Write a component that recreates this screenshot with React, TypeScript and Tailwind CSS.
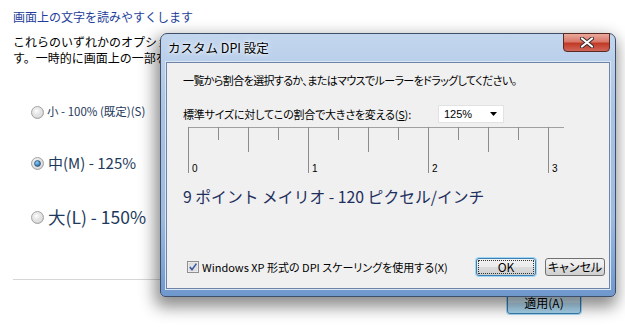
const jp = "font-['Noto_Sans_CJK_JP','Noto_Sans',sans-serif]";
const ui = "[font-feature-settings:'palt']";

function Radio({ checked }: { checked?: boolean }) {
  return (
    <svg width="13" height="13" viewBox="0 0 13 13" className="shrink-0">
      <defs>
        <radialGradient id="rg" cx="40%" cy="35%" r="70%">
          <stop offset="0%" stopColor="#ffffff" />
          <stop offset="100%" stopColor="#c9c9c9" />
        </radialGradient>
        <radialGradient id="dot" cx="40%" cy="35%" r="70%">
          <stop offset="0%" stopColor="#8fd0f5" />
          <stop offset="100%" stopColor="#1b5f9c" />
        </radialGradient>
      </defs>
      <circle cx="6.5" cy="6.5" r="6" fill="url(#rg)" stroke="#a4a4a4" strokeWidth="1" />
      <circle cx="6.5" cy="6.5" r="4" fill="none" stroke="#e8e8e8" strokeWidth="1" />
      {checked && <circle cx="6.5" cy="6.5" r="3" fill="url(#dot)" stroke="#1f3f66" strokeWidth="0.6" />}
    </svg>
  );
}

function Ruler() {
  const ticks = Array.from({ length: 13 }, (_, i) => i);
  return (
    <svg width="376" height="46" className="block">
      <line x1="0" y1="0.5" x2="376" y2="0.5" stroke="#a0a0a0" />
      {ticks.map((i) => {
        const x = i * 30 + 0.5;
        const h = i % 4 === 0 ? 46 : i % 2 === 0 ? 25 : 13;
        return <line key={i} x1={x} y1="0" x2={x} y2={h} stroke="#8c8c8c" />;
      })}
      {[0, 1, 2, 3].map((n) => (
        <text key={n} x={n * 120 + 4} y="45" fontSize="10" fill="#000" fontFamily="'Liberation Sans', sans-serif">
          {n}
        </text>
      ))}
    </svg>
  );
}

function WinButton({ children, focused }: { children: React.ReactNode; focused?: boolean }) {
  return (
    <div
      className={`h-[18px] w-[60px] rounded-[3px] border ${
        focused ? 'border-[#3c7fb1] shadow-[0_0_0_1px_#9fd5f5]' : 'border-[#707070]'
      } bg-[linear-gradient(#f2f2f2_0%,#ebebeb_50%,#dddddd_51%,#cfcfcf_100%)] p-[1px]`}
    >
      <div
        className={`flex h-full items-center justify-center text-[12px] leading-none text-black ${
          focused ? 'outline outline-1 outline-dotted outline-[#333] -outline-offset-1' : ''
        }`}
      >
        {children}
      </div>
    </div>
  );
}

export default function App() {
  return (
    <div className={`relative h-[327px] w-[625px] overflow-hidden bg-white ${jp}`}>
      {/* control panel page */}
      <div className="flex flex-col pl-[13px] pt-[8px]">
        <p className="h-[17px] whitespace-nowrap text-[12px] leading-[17px] text-[#1e3e9a]">画面上の文字を読みやすくします</p>
        <div className="mt-[9px] w-[147px] overflow-hidden whitespace-nowrap text-[12px] leading-[16px] text-black">
          <p>これらのいずれかのオプションを選択して、画面上のテキストやその他の項目のサイズを変更できま</p>
          <p>す。一時的に画面上の一部を拡大するには、拡大鏡 ツールを使用します。</p>
        </div>
        <div className="ml-[18px] mt-[38px] flex h-[16px] items-center gap-[3px] text-[11.5px] text-[#1e395b]">
          <Radio />
          <span>小 - 100% (既定)(S)</span>
        </div>
        <div className="ml-[18px] mt-[33px] flex h-[20px] items-center gap-[4px] text-[15px] text-[#1e395b]">
          <Radio checked />
          <span>中(M) - 125%</span>
        </div>
        <div className="ml-[18px] mt-[32px] flex h-[24px] items-center gap-[4px] text-[17.5px] text-[#1e395b]">
          <Radio />
          <span>大(L) - 150%</span>
        </div>
        <div className="mr-[13px] mt-[50px] border-t border-[#d6d6d6]" />
        <div className="mr-[44px] mt-[12px] flex justify-end">
          <div className="flex h-[22px] w-[74px] items-center justify-center rounded-[3px] border border-[#3c7fb1] bg-[linear-gradient(#e3f3fc_0%,#cdeafa_50%,#b6dff6_51%,#a9d8f3_100%)] text-[12px] text-black shadow-[0_0_0_1px_#a8dcf7]">
            適用(A)
          </div>
        </div>
      </div>

      {/* dialog */}
      <div className="absolute left-[160px] top-[33px] flex h-[264px] w-[456px] flex-col rounded-t-[7px] rounded-b-[5px] border border-[#3d4f6b] bg-[linear-gradient(#c3d6ee_0%,#a9c3e4_30%,#9dbae0_70%,#6f98cd_100%)] shadow-[-2px_7px_16px_3px_rgba(0,0,0,0.45)]">
        <div className="relative flex h-[28px] shrink-0 items-center pl-[7px]">
          <span className="text-[12.5px] text-black [text-shadow:0_0_6px_#ffffff,0_0_3px_#ffffff]">カスタム DPI 設定</span>
          <div className="absolute left-[402px] top-[-1px] flex h-[19px] w-[47px] items-center justify-center rounded-b-[4px] border border-[#5a2a22] bg-[linear-gradient(#e9a99c_0%,#d9786a_45%,#c23a25_55%,#d0665a_100%)]">
            <svg width="14" height="11" viewBox="0 0 14 11">
              <path d="M2 1.5 L12 9.5 M12 1.5 L2 9.5" stroke="#3a2a2a" strokeWidth="4" strokeLinecap="round" />
              <path d="M2 1.5 L12 9.5 M12 1.5 L2 9.5" stroke="#ffffff" strokeWidth="2.2" strokeLinecap="round" />
            </svg>
          </div>
        </div>
        <div className="mx-[5px] mb-[7px] flex flex-1 flex-col border border-[#6e84a6] bg-[#f0f0f0] pl-[16px] pr-[4px] pt-[9px] shadow-[0_0_0_1px_#d8e6f6]">
          <p className={`h-[16px] whitespace-nowrap text-[11px] leading-[16px] tracking-[-0.6px] text-black ${ui}`}>
            一覧から割合を選択するか、またはマウスでルーラーをドラッグしてください。
          </p>
          <div className="mt-[17px] flex h-[18px] items-center">
            <span className={`w-[255px] whitespace-nowrap text-[11px] tracking-[-0.2px] text-black ${ui}`}>
              標準サイズに対してこの割合で大きさを変える(<span className="underline">S</span>):
            </span>
            <div className="flex h-[18px] w-[66px] items-center justify-between border border-[#e2e2e2] bg-white pl-[5px] pr-[6px]">
              <span className="font-['Liberation_Sans',sans-serif] text-[11px] text-black">125%</span>
              <svg width="7" height="4" viewBox="0 0 7 4">
                <path d="M0 0 H7 L3.5 4 Z" fill="#000" />
              </svg>
            </div>
          </div>
          <div className="ml-[5px] mt-[4px]">
            <Ruler />
          </div>
          <p className="mt-[14px] h-[20px] whitespace-nowrap text-[15.8px] leading-[20px] text-[#1e2f5e]">
            9 ポイント メイリオ - 120 ピクセル/インチ
          </p>
          <div className="mt-[51px] flex h-[18px] items-center">
            <div className="ml-[4px] flex flex-1 items-center gap-[3px]">
              <svg width="12" height="12" viewBox="0 0 12 12" className="shrink-0">
                <rect x="0.5" y="0.5" width="11" height="11" fill="#f4f4f4" stroke="#8e8f8f" />
                <rect x="2" y="2" width="8" height="8" fill="#e2e2e2" stroke="#d0d0d0" strokeWidth="0.5" />
                <path d="M2.8 6 L5 8.6 L9.4 2.6" fill="none" stroke="#3d59a0" strokeWidth="1.6" />
              </svg>
              <span className={`whitespace-nowrap text-[11px] text-black ${ui}`}>
                Windows XP 形式の DPI スケーリングを使用する(X)
              </span>
            </div>
            <div className="flex gap-[9px]">
              <WinButton focused>OK</WinButton>
              <WinButton>
                <span className={ui}>キャンセル</span>
              </WinButton>
            </div>
          </div>
        </div>
      </div>
    </div>
  );
}
